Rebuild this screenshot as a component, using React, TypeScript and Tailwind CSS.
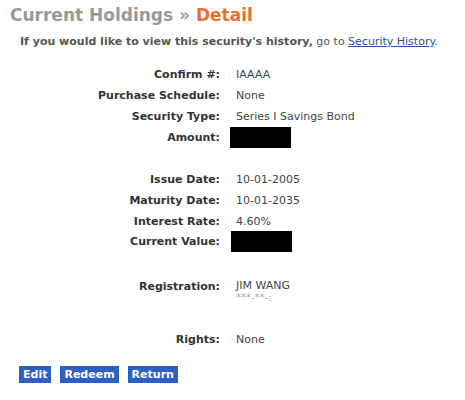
import React from "react";

const Row = ({ label, children, h = "h-[21px]" }: { label: string; children?: React.ReactNode; h?: string }) => (
  <div className={`flex items-center ${h}`}>
    <div className="w-[210px] text-right font-bold text-[#333]">{label}</div>
    <div className="ml-4 text-[#444]">{children}</div>
  </div>
);

const Box = () => <div className="w-[61px] h-[21px] bg-black" />;

export default function App() {
  return (
    <div className="w-[465px] h-[400px] bg-white text-[11px] leading-[13px]" style={{ fontFamily: '"DejaVu Sans", Verdana, sans-serif' }}>
      <div className="pl-[10px] pt-[3px] text-[17px] leading-[24px] font-bold">
        <span className="text-[#999]">Current Holdings » </span>
        <span className="text-[#e8702a]">Detail</span>
      </div>
      <div className="pl-[20px] mt-[8px] text-[#555]">
        <span className="font-bold">If you would like to view this security's history,</span> go to{" "}
        <a href="#" className="text-[#2850a8] underline">Security History</a>.
      </div>
      <div className="pl-[10px] mt-[16px]">
        <Row label="Confirm #:">IAAAA</Row>
        <Row label="Purchase Schedule:">None</Row>
        <Row label="Security Type:">Series I Savings Bond</Row>
        <Row label="Amount:" h="h-[20px]"><div className="-ml-[6px]"><Box /></div></Row>
        <div className="h-[22px]" />
        <Row label="Issue Date:">10-01-2005</Row>
        <Row label="Maturity Date:">10-01-2035</Row>
        <Row label="Interest Rate:" h="h-[20px]">4.60%</Row>
        <Row label="Current Value:"><div className="-ml-[5px]"><Box /></div></Row>
        <div className="h-[26px]" />
        <div className="flex">
          <div className="w-[210px] text-right font-bold text-[#333] pt-[2px]">Registration:</div>
          <div className="ml-4 text-[#444]">
            <div className="leading-[12px] pt-[2px]">JIM WANG</div>
            <div className="leading-[12px] text-[#aaa] text-[10px]">***-**-:</div>
          </div>
        </div>
        <div className="h-[25px]" />
        <Row label="Rights:">None</Row>
      </div>
      <div className="flex gap-[9px] pl-[19px] mt-[16px]">
        <button className="h-[17px] px-[4px] bg-[#2d5fc4] text-white font-bold leading-[17px]">Edit</button>
        <button className="h-[17px] px-[4px] bg-[#2d5fc4] text-white font-bold leading-[17px]">Redeem</button>
        <button className="h-[17px] px-[4px] bg-[#2d5fc4] text-white font-bold leading-[17px]">Return</button>
      </div>
    </div>
  );
}
